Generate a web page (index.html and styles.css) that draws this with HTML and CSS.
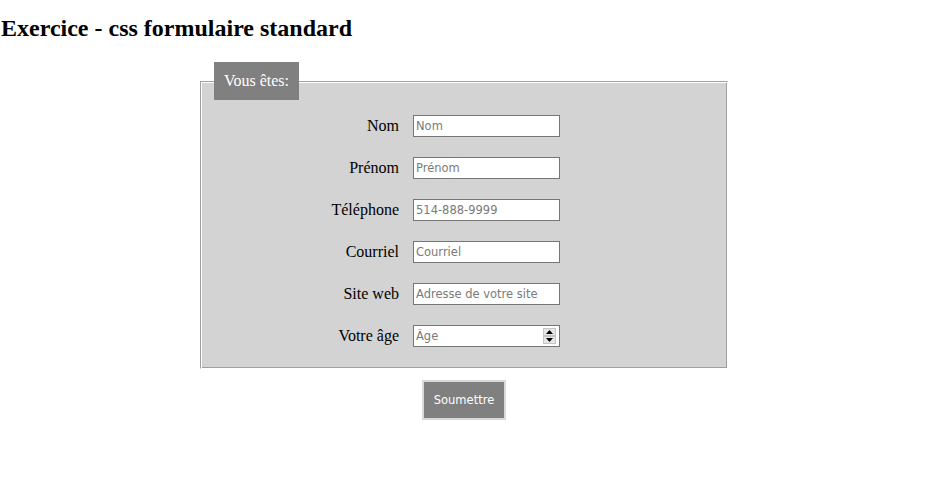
FILE: index.html
```html
<!DOCTYPE html>
<html lang="fr">
<head>
<meta charset="utf-8">
<title>Exercice - css formulaire standard</title>
<link rel="stylesheet" href="styles.css">
</head>
<body>
<h2 class="title">Exercice - css formulaire standard</h2>
<form class="form">
  <fieldset class="box">
    <legend class="legend">Vous êtes:</legend>
    <div class="grid">
      <label class="lbl" for="nom">Nom</label>
      <input class="field" id="nom" type="text" placeholder="Nom">
      <label class="lbl" for="prenom">Prénom</label>
      <input class="field" id="prenom" type="text" placeholder="Prénom">
      <label class="lbl" for="tel">Téléphone</label>
      <input class="field" id="tel" type="tel" placeholder="514-888-9999">
      <label class="lbl" for="mail">Courriel</label>
      <input class="field" id="mail" type="email" placeholder="Courriel">
      <label class="lbl" for="web">Site web</label>
      <input class="field" id="web" type="url" placeholder="Adresse de votre site">
      <label class="lbl" for="age">Votre âge</label>
      <div class="numwrap">
        <input class="field num" id="age" type="number" placeholder="Âge">
        <span class="spin">
          <span class="spin-btn"><svg width="7" height="4" viewBox="0 0 7 4"><path d="M0 4 L3.5 0 L7 4 Z" fill="#000"/></svg></span>
          <span class="spin-btn"><svg width="7" height="4" viewBox="0 0 7 4"><path d="M0 0 L7 0 L3.5 4 Z" fill="#000"/></svg></span>
        </span>
      </div>
    </div>
  </fieldset>
  <div class="actions">
    <button class="submit" type="submit">Soumettre</button>
  </div>
</form>
</body>
</html>
```

FILE: styles.css
```css
html, body {
  margin: 0;
  padding: 0;
  background: #fff;
}
body {
  font-family: "Liberation Serif", "Times New Roman", serif;
  font-size: 16px;
  color: #000;
}
.title {
  font-size: 24px;
  font-weight: bold;
  margin: 15px 0 0 1px;
  line-height: 27px;
}
.form {
  margin: 0;
  padding-top: 20px;
}
.box {
  box-sizing: border-box;
  width: 528px;
  margin: 0 0 0 200px;
  padding: 15px 12px 21px 13px;
  background: #d3d3d3;
  border: 1px solid;
  border-color: #a0a0a0 #ffffff #ffffff #a0a0a0;
  box-shadow: inset 1px 1px 0 #ffffff, inset -1px -1px 0 #a0a0a0;
  min-width: 0;
}
.legend {
  background: #808080;
  color: #fff;
  padding: 10px 10px;
  line-height: 18px;
  font-size: 16px;
}
.grid {
  display: grid;
  grid-template-columns: 185px 147px;
  column-gap: 14px;
  row-gap: 20px;
  align-items: center;
}
.lbl {
  text-align: right;
  font-size: 16px;
  line-height: 18px;
}
.field {
  box-sizing: border-box;
  width: 147px;
  height: 22px;
  margin: 0;
  padding: 1px 2px;
  border: 1px solid #767676;
  background: #fff;
  font-family: "DejaVu Sans", Verdana, sans-serif;
  font-size: 11.5px;
  color: #000;
  outline: none;
}
.field::placeholder {
  color: #7a7a7a;
  opacity: 1;
}
.numwrap {
  position: relative;
  width: 147px;
  height: 22px;
}
.num {
  -moz-appearance: textfield;
}
.num::-webkit-inner-spin-button,
.num::-webkit-outer-spin-button {
  -webkit-appearance: none;
  margin: 0;
}
.spin {
  position: absolute;
  right: 4px;
  top: 3px;
  width: 13px;
  height: 16px;
  display: flex;
  flex-direction: column;
}
.spin-btn {
  flex: 1;
  display: flex;
  align-items: center;
  justify-content: center;
  background: #e6e6e6;
  border: 1px solid #c4c4c4;
  box-sizing: border-box;
}
.actions {
  width: 528px;
  margin: 11px 0 0 200px;
  display: flex;
  justify-content: center;
}
.submit {
  box-sizing: border-box;
  width: 84px;
  height: 40px;
  background: #808080;
  color: #fff;
  border: 2px solid #d9d9d9;
  font-family: "DejaVu Sans", Verdana, sans-serif;
  font-size: 11.5px;
  padding: 0;
}
```
